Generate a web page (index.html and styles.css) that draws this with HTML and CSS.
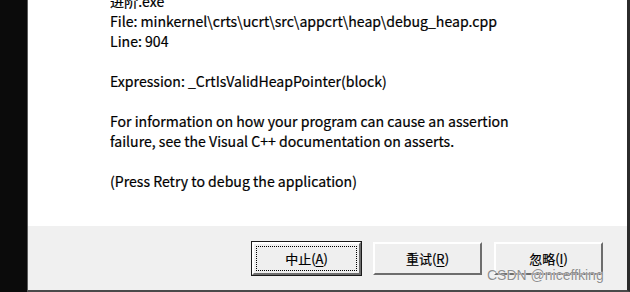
FILE: index.html
```html
<!DOCTYPE html>
<html lang="zh-CN">
<head>
    <meta charset="UTF-8">
    <title>Microsoft Visual C++ Runtime Library</title>
    <link rel="stylesheet" href="styles.css">
</head>
<body>
    <div class="strip"></div>
    <div class="dialog">
        <div class="content">
            <div class="message">
                <p>进阶.exe</p>
                <p>File: minkernel\crts\ucrt\src\appcrt\heap\debug_heap.cpp</p>
                <p>Line: 904</p>
                <p class="gap">Expression: _CrtIsValidHeapPointer(block)</p>
                <p class="gap">For information on how your program can cause an assertion</p>
                <p>failure, see the Visual C++ documentation on asserts.</p>
                <p class="gap">(Press Retry to debug the application)</p>
            </div>
        </div>
        <div class="footer">
            <button class="btn default"><span class="focus">中止(<u>A</u>)</span></button>
            <button class="btn">重试(<u>R</u>)</button>
            <button class="btn">忽略(<u>I</u>)</button>
        </div>
    </div>
    <div class="watermark">CSDN @niceffking</div>
</body>
</html>
```

FILE: styles.css
```css
body {
    margin: 0;
    width: 630px;
    height: 292px;
    overflow: hidden;
    display: flex;
    background: #0b0b0b;
    position: relative;
}

.strip {
    width: 27px;
    flex-shrink: 0;
}

.dialog {
    flex: 1;
    display: flex;
    flex-direction: column;
    border-left: 1px solid #5c5c5c;
    border-right: 3px solid #2b2b2b;
    border-bottom: 2px solid #4a4a4a;
    height: 290px;
}

.content {
    background: #fff;
    height: 226px;
    padding-left: 82px;
    overflow: hidden;
}

.message {
    margin-top: -9px;
    font-family: "Noto Sans CJK SC", "Noto Sans", sans-serif;
    font-size: 14.1px;
    line-height: 20px;
    color: #000;
    -webkit-text-stroke: 0.2px #000;
}

.message p {
    margin: 0;
    white-space: nowrap;
}

.message p.gap {
    margin-top: 20px;
}

.footer {
    flex: 1;
    background: #f0f0f0;
    display: flex;
    justify-content: flex-end;
    align-items: flex-start;
    gap: 12px;
    padding: 16px 24px 0 0;
}

.btn {
    width: 109px;
    height: 33px;
    padding: 0;
    background: #efefef;
    border: 2px solid;
    border-color: #fff #6d6d6d #6d6d6d #fff;
    font-family: "Noto Sans CJK SC", sans-serif;
    font-size: 13px;
    color: #000;
    -webkit-text-stroke: 0.2px #000;
    display: flex;
    align-items: center;
    justify-content: center;
}

.btn u {
    text-decoration-thickness: 1px;
    text-underline-offset: 2px;
}

.btn.default {
    outline: 1px solid #1a1a1a;
    outline-offset: 0;
}

.focus {
    display: flex;
    align-items: center;
    justify-content: center;
    width: 99px;
    height: 23px;
    border: 1px dotted #000;
}

.watermark {
    position: absolute;
    left: 487px;
    top: 267px;
    font-family: "Liberation Sans", sans-serif;
    font-size: 14px;
    color: #8f8f8f;
    text-shadow: 0 0 1px #fff, 0 0 1px #fff;
}
```
